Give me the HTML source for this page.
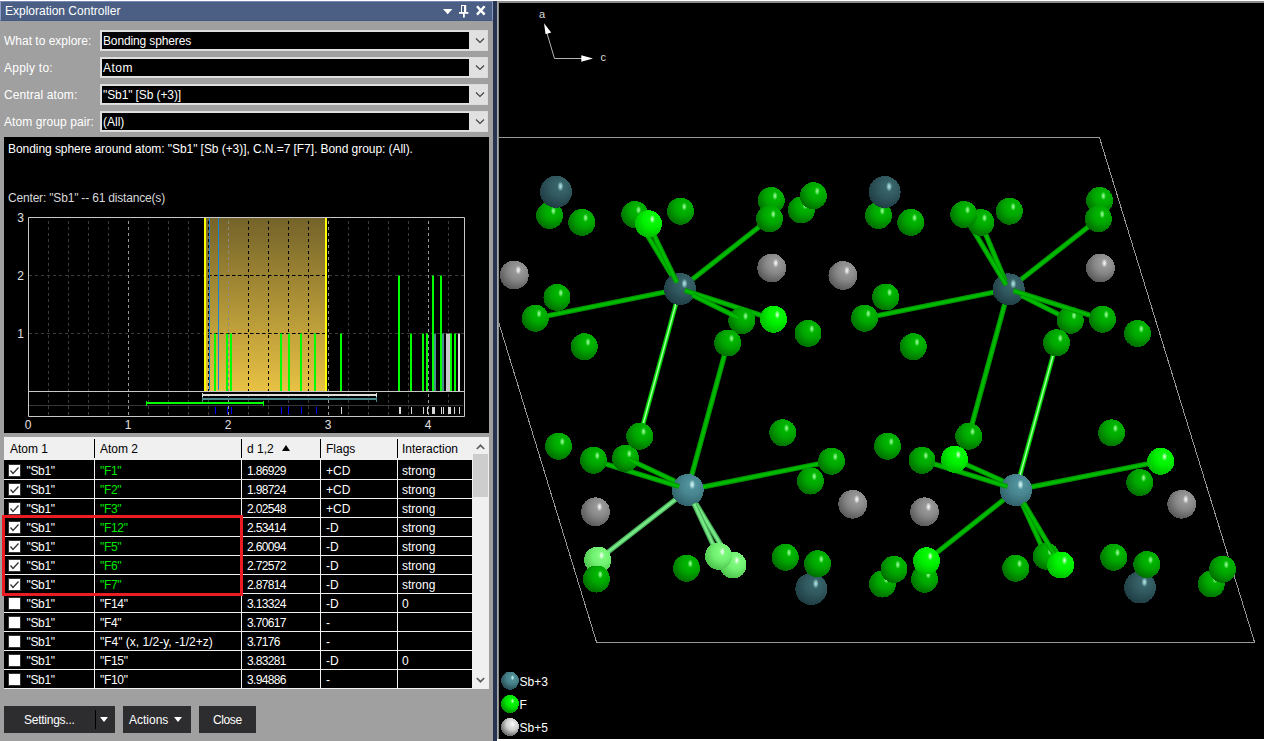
<!DOCTYPE html>
<html><head><meta charset="utf-8"><title>Exploration Controller</title><style>
*{margin:0;padding:0;box-sizing:border-box}
html,body{width:1264px;height:741px;overflow:hidden;background:#000}
body{position:relative;font-family:"Liberation Sans",sans-serif;font-size:12px;color:#fff}
#view{position:absolute;left:0;top:0;width:1264px;height:741px;background:#000}
#scene{position:absolute;left:0;top:0}
#topw{position:absolute;left:0;top:0;width:1264px;height:1px;background:#fff}
#vtop{position:absolute;left:497px;top:1px;width:767px;height:2px;background:#8c8c8c}
#vleft{position:absolute;left:497px;top:1px;width:2px;height:738px;background:linear-gradient(90deg,#a8a8a8 50%,#8a8a8a 50%)}
#vbot{position:absolute;left:497px;top:739px;width:767px;height:2px;background:#fff}
#split{position:absolute;left:493px;top:1px;width:4px;height:740px;background:#27344f}
#panel{position:absolute;left:0;top:1px;width:493px;height:740px;background:#a0a0a0}
#title{position:absolute;left:0;top:0;width:493px;height:20px;background:#4b5f85;border-top:1px solid #7486b2;border-right:1px solid #8799c6;border-left:1px solid #8c9dc6;border-bottom:1px solid #465a80}
#title span{position:absolute;left:4px;top:2px;font-size:12px;line-height:14px;color:#fff;white-space:nowrap}
.lbl{position:absolute;left:4px;font-size:12px;line-height:14px;color:#fff;white-space:nowrap}
.combo{position:absolute;left:100px;width:388px;height:21px;background:#e1e1e1;border:1px solid #dcdcdc}
.combo .in{position:absolute;left:1px;top:1px;width:367px;height:17px;background:#000;color:#fff;line-height:19px;padding-left:1px;white-space:nowrap}
.combo svg{position:absolute;left:374px;top:7px}
#info{position:absolute;left:4px;top:136px;width:485px;height:296px;background:#000}
#info p{position:absolute;left:4px;white-space:nowrap;line-height:14px}
#chart{position:absolute;left:0;top:-1px}
#tbl{position:absolute;left:4px;top:436px;width:468px;height:252px;background:#000;overflow:hidden}
.th{position:absolute;left:0;top:0;width:468px;height:23px;background:#f0f0f0;color:#000}
.th span{position:absolute;top:5px;line-height:14px;white-space:nowrap}
.th i{position:absolute;top:2px;width:1px;height:19px;background:#000}
.sort{position:absolute;left:278px;top:8px;width:0;height:0;border-left:4.5px solid transparent;border-right:4.5px solid transparent;border-bottom:6px solid #000}
.tr{position:absolute;left:0;width:468px;height:19px;border-bottom:1px solid #f0f0f0}
.tr span{position:absolute;top:3px;line-height:14px;white-space:nowrap;color:#fff}
.tr.on .a2{color:#00e800}
.num{letter-spacing:-0.65px}
.cb{position:absolute;left:4px;top:3px;width:13px;height:13px;background:#fff;border:1px solid #333}
.cb svg{position:absolute;left:-1px;top:-1px}
.vl{position:absolute;top:23px;width:1px;height:229px;background:#f0f0f0}
#sb{position:absolute;left:472px;top:436px;width:17px;height:252px;background:#f0f0f0}
#sb .thumb{position:absolute;left:1px;top:17px;width:15px;height:43px;background:#cdcdcd}
#sb svg{position:absolute;left:4px}
#red{position:absolute;left:2px;top:514px;width:241px;height:81px;border:3px solid #ec1c24}
.btn{position:absolute;top:705px;height:27px;background:#2d2d30;color:#fff;line-height:27px;white-space:nowrap}
.tri{position:absolute;width:0;height:0;border-left:4.5px solid transparent;border-right:4.5px solid transparent;border-top:5px solid #fff}
</style></head>
<body>
<div id="view"><svg id="scene" width="1264" height="741" viewBox="0 0 1264 741"><defs><radialGradient id="gG" cx="0.62" cy="0.36" r="0.80" fx="0.64" fy="0.32"><stop offset="0" stop-color="#00c000"/><stop offset="0.42" stop-color="#00a600"/><stop offset="0.8" stop-color="#007400"/><stop offset="1" stop-color="#005400"/></radialGradient><radialGradient id="hG"><stop offset="0" stop-color="#a8ffa8" stop-opacity="0.88"/><stop offset="0.35" stop-color="#a8ffa8" stop-opacity="0.7"/><stop offset="1" stop-color="#a8ffa8" stop-opacity="0"/></radialGradient><radialGradient id="gB" cx="0.62" cy="0.36" r="0.80" fx="0.64" fy="0.32"><stop offset="0" stop-color="#10ff10"/><stop offset="0.42" stop-color="#00f000"/><stop offset="0.8" stop-color="#00c000"/><stop offset="1" stop-color="#00a000"/></radialGradient><radialGradient id="hB"><stop offset="0" stop-color="#e0ffe0" stop-opacity="0.88"/><stop offset="0.35" stop-color="#e0ffe0" stop-opacity="0.7"/><stop offset="1" stop-color="#e0ffe0" stop-opacity="0"/></radialGradient><radialGradient id="gL" cx="0.62" cy="0.36" r="0.80" fx="0.64" fy="0.32"><stop offset="0" stop-color="#88ff88"/><stop offset="0.42" stop-color="#70f070"/><stop offset="0.8" stop-color="#50c850"/><stop offset="1" stop-color="#40a840"/></radialGradient><radialGradient id="hL"><stop offset="0" stop-color="#ffffff" stop-opacity="0.88"/><stop offset="0.35" stop-color="#ffffff" stop-opacity="0.7"/><stop offset="1" stop-color="#ffffff" stop-opacity="0"/></radialGradient><radialGradient id="gS" cx="0.62" cy="0.36" r="0.80" fx="0.64" fy="0.32"><stop offset="0" stop-color="#3b6a70"/><stop offset="0.42" stop-color="#30585e"/><stop offset="0.8" stop-color="#204046"/><stop offset="1" stop-color="#162e34"/></radialGradient><radialGradient id="hS"><stop offset="0" stop-color="#b8f0ec" stop-opacity="0.88"/><stop offset="0.35" stop-color="#b8f0ec" stop-opacity="0.7"/><stop offset="1" stop-color="#b8f0ec" stop-opacity="0"/></radialGradient><radialGradient id="gT" cx="0.62" cy="0.36" r="0.80" fx="0.64" fy="0.32"><stop offset="0" stop-color="#569aa4"/><stop offset="0.42" stop-color="#47848e"/><stop offset="0.8" stop-color="#33666e"/><stop offset="1" stop-color="#284e56"/></radialGradient><radialGradient id="hT"><stop offset="0" stop-color="#e0ffff" stop-opacity="0.88"/><stop offset="0.35" stop-color="#e0ffff" stop-opacity="0.7"/><stop offset="1" stop-color="#e0ffff" stop-opacity="0"/></radialGradient><radialGradient id="gY" cx="0.62" cy="0.36" r="0.80" fx="0.64" fy="0.32"><stop offset="0" stop-color="#a2a2a2"/><stop offset="0.42" stop-color="#888888"/><stop offset="0.8" stop-color="#5e5e5e"/><stop offset="1" stop-color="#444444"/></radialGradient><radialGradient id="hY"><stop offset="0" stop-color="#ffffff" stop-opacity="0.88"/><stop offset="0.35" stop-color="#ffffff" stop-opacity="0.7"/><stop offset="1" stop-color="#ffffff" stop-opacity="0"/></radialGradient><radialGradient id="gLS" cx="0.62" cy="0.36" r="0.80" fx="0.64" fy="0.32"><stop offset="0" stop-color="#5a9aa0"/><stop offset="0.42" stop-color="#468088"/><stop offset="0.8" stop-color="#2a5058"/><stop offset="1" stop-color="#2a5058"/></radialGradient><radialGradient id="hLS"><stop offset="0" stop-color="#d0ffff" stop-opacity="0.88"/><stop offset="0.35" stop-color="#d0ffff" stop-opacity="0.7"/><stop offset="1" stop-color="#d0ffff" stop-opacity="0"/></radialGradient><radialGradient id="gLF" cx="0.62" cy="0.36" r="0.80" fx="0.64" fy="0.32"><stop offset="0" stop-color="#10ff10"/><stop offset="0.42" stop-color="#00e800"/><stop offset="0.8" stop-color="#009800"/><stop offset="1" stop-color="#009800"/></radialGradient><radialGradient id="hLF"><stop offset="0" stop-color="#d0ffd0" stop-opacity="0.88"/><stop offset="0.35" stop-color="#d0ffd0" stop-opacity="0.7"/><stop offset="1" stop-color="#d0ffd0" stop-opacity="0"/></radialGradient><radialGradient id="gLY" cx="0.62" cy="0.36" r="0.80" fx="0.64" fy="0.32"><stop offset="0" stop-color="#f4f4f4"/><stop offset="0.42" stop-color="#d0d0d0"/><stop offset="0.8" stop-color="#707070"/><stop offset="1" stop-color="#707070"/></radialGradient><radialGradient id="hLY"><stop offset="0" stop-color="#ffffff" stop-opacity="0.88"/><stop offset="0.35" stop-color="#ffffff" stop-opacity="0.7"/><stop offset="1" stop-color="#ffffff" stop-opacity="0"/></radialGradient></defs><g stroke="#989898" stroke-width="1" fill="none" shape-rendering="crispEdges"><path d="M499 137.5H1099.5L1254.5 642H596.5L499 323.5"/></g><line x1="680" y1="289" x2="769.5" y2="218.75" stroke="#009a00" stroke-width="5.2"/><line x1="680" y1="289" x2="769.5" y2="218.75" stroke="#00bc00" stroke-width="2.60"/><line x1="680" y1="289" x2="535.25" y2="318.25" stroke="#009a00" stroke-width="5.2"/><line x1="680" y1="289" x2="535.25" y2="318.25" stroke="#00bc00" stroke-width="2.60"/><line x1="680" y1="289" x2="634.75" y2="214.5" stroke="#009a00" stroke-width="5.2"/><line x1="680" y1="289" x2="634.75" y2="214.5" stroke="#00bc00" stroke-width="2.60"/><line x1="680" y1="289" x2="639.75" y2="436.25" stroke="#00c800" stroke-width="4.6"/><line x1="680" y1="289" x2="639.75" y2="436.25" stroke="#28f028" stroke-width="2.30"/><line x1="680" y1="289" x2="639.75" y2="436.25" stroke="#b0ffb0" stroke-width="1.1"/><line x1="1008.75" y1="289.25" x2="1098.5" y2="218.75" stroke="#009a00" stroke-width="5.2"/><line x1="1008.75" y1="289.25" x2="1098.5" y2="218.75" stroke="#00bc00" stroke-width="2.60"/><line x1="1008.75" y1="289.25" x2="864.5" y2="318.25" stroke="#009a00" stroke-width="5.2"/><line x1="1008.75" y1="289.25" x2="864.5" y2="318.25" stroke="#00bc00" stroke-width="2.60"/><line x1="1008.75" y1="289.25" x2="968.75" y2="436.25" stroke="#009a00" stroke-width="5.2"/><line x1="1008.75" y1="289.25" x2="968.75" y2="436.25" stroke="#00bc00" stroke-width="2.60"/><line x1="687.7" y1="490" x2="727.75" y2="343" stroke="#009a00" stroke-width="5.2"/><line x1="687.7" y1="490" x2="727.75" y2="343" stroke="#00bc00" stroke-width="2.60"/><line x1="687.7" y1="490" x2="831.5" y2="461.25" stroke="#009a00" stroke-width="5.2"/><line x1="687.7" y1="490" x2="831.5" y2="461.25" stroke="#00bc00" stroke-width="2.60"/><line x1="687.7" y1="490" x2="597.75" y2="560" stroke="#48b458" stroke-width="5.2"/><line x1="687.7" y1="490" x2="597.75" y2="560" stroke="#78e888" stroke-width="2.60"/><line x1="687.7" y1="490" x2="733" y2="565" stroke="#48b458" stroke-width="5.2"/><line x1="687.7" y1="490" x2="733" y2="565" stroke="#78e888" stroke-width="2.60"/><line x1="1016" y1="490" x2="1056.5" y2="342.75" stroke="#00c800" stroke-width="4.6"/><line x1="1016" y1="490" x2="1056.5" y2="342.75" stroke="#28f028" stroke-width="2.30"/><line x1="1016" y1="490" x2="1056.5" y2="342.75" stroke="#b0ffb0" stroke-width="1.1"/><line x1="1016" y1="490" x2="1160.75" y2="461.25" stroke="#009a00" stroke-width="5.2"/><line x1="1016" y1="490" x2="1160.75" y2="461.25" stroke="#00bc00" stroke-width="2.60"/><line x1="1016" y1="490" x2="926.5" y2="560.75" stroke="#009a00" stroke-width="5.2"/><line x1="1016" y1="490" x2="926.5" y2="560.75" stroke="#00bc00" stroke-width="2.60"/><line x1="1016" y1="490" x2="1046.25" y2="556.25" stroke="#009a00" stroke-width="5.2"/><line x1="1016" y1="490" x2="1046.25" y2="556.25" stroke="#00bc00" stroke-width="2.60"/><circle cx="680" cy="289" r="16.0" fill="url(#gS)" shape-rendering="crispEdges"/><ellipse cx="684.48" cy="283.56" rx="3.04" ry="4.96" fill="url(#hS)"/><circle cx="1008.75" cy="289.25" r="16.0" fill="url(#gS)" shape-rendering="crispEdges"/><ellipse cx="1013.23" cy="283.81" rx="3.04" ry="4.96" fill="url(#hS)"/><circle cx="687.7" cy="490" r="16.0" fill="url(#gT)" shape-rendering="crispEdges"/><ellipse cx="692.18" cy="484.56" rx="3.04" ry="4.96" fill="url(#hT)"/><circle cx="1016" cy="490" r="16.0" fill="url(#gT)" shape-rendering="crispEdges"/><ellipse cx="1020.48" cy="484.56" rx="3.04" ry="4.96" fill="url(#hT)"/><line x1="676.96" y1="282.7" x2="648.5" y2="223.75" stroke="#009a00" stroke-width="5.2"/><line x1="676.96" y1="282.7" x2="648.5" y2="223.75" stroke="#00bc00" stroke-width="2.60"/><line x1="684.76" y1="290.54" x2="773.5" y2="319.25" stroke="#009a00" stroke-width="5.2"/><line x1="684.76" y1="290.54" x2="773.5" y2="319.25" stroke="#00bc00" stroke-width="2.60"/><line x1="1005.27" y1="280.95" x2="980.75" y2="222.5" stroke="#009a00" stroke-width="5.2"/><line x1="1005.27" y1="280.95" x2="980.75" y2="222.5" stroke="#00bc00" stroke-width="2.60"/><line x1="1006.17" y1="284.97" x2="963.75" y2="214.5" stroke="#009a00" stroke-width="5.2"/><line x1="1006.17" y1="284.97" x2="963.75" y2="214.5" stroke="#00bc00" stroke-width="2.60"/><line x1="1021.25" y1="295.55" x2="1070.25" y2="320.25" stroke="#009a00" stroke-width="5.2"/><line x1="1021.25" y1="295.55" x2="1070.25" y2="320.25" stroke="#00bc00" stroke-width="2.60"/><line x1="679.1" y1="486.4" x2="593.5" y2="460.25" stroke="#009a00" stroke-width="5.2"/><line x1="679.1" y1="486.4" x2="593.5" y2="460.25" stroke="#00bc00" stroke-width="2.60"/><line x1="1007.4" y1="486.4" x2="922" y2="460.25" stroke="#009a00" stroke-width="5.2"/><line x1="1007.4" y1="486.4" x2="922" y2="460.25" stroke="#00bc00" stroke-width="2.60"/><circle cx="549.6" cy="215.5" r="13.5" fill="url(#gG)" shape-rendering="crispEdges"/><ellipse cx="553.38" cy="210.91" rx="2.56" ry="4.18" fill="url(#hG)"/><circle cx="634.75" cy="214.5" r="13.5" fill="url(#gG)" shape-rendering="crispEdges"/><ellipse cx="638.53" cy="209.91" rx="2.56" ry="4.18" fill="url(#hG)"/><circle cx="771.2" cy="200.5" r="13.5" fill="url(#gG)" shape-rendering="crispEdges"/><ellipse cx="774.98" cy="195.91" rx="2.56" ry="4.18" fill="url(#hG)"/><circle cx="801.3" cy="210" r="13.5" fill="url(#gG)" shape-rendering="crispEdges"/><ellipse cx="805.08" cy="205.41" rx="2.56" ry="4.18" fill="url(#hG)"/><circle cx="878.5" cy="215.5" r="13.5" fill="url(#gG)" shape-rendering="crispEdges"/><ellipse cx="882.28" cy="210.91" rx="2.56" ry="4.18" fill="url(#hG)"/><circle cx="980.75" cy="222.5" r="13.5" fill="url(#gG)" shape-rendering="crispEdges"/><ellipse cx="984.53" cy="217.91" rx="2.56" ry="4.18" fill="url(#hG)"/><circle cx="1099.6" cy="200.5" r="13.5" fill="url(#gG)" shape-rendering="crispEdges"/><ellipse cx="1103.38" cy="195.91" rx="2.56" ry="4.18" fill="url(#hG)"/><circle cx="741.75" cy="320.75" r="13.5" fill="url(#gG)" shape-rendering="crispEdges"/><ellipse cx="745.53" cy="316.16" rx="2.56" ry="4.18" fill="url(#hG)"/><circle cx="1070.25" cy="320.25" r="13.5" fill="url(#gG)" shape-rendering="crispEdges"/><ellipse cx="1074.03" cy="315.66" rx="2.56" ry="4.18" fill="url(#hG)"/><circle cx="625.5" cy="458.25" r="13.5" fill="url(#gG)" shape-rendering="crispEdges"/><ellipse cx="629.28" cy="453.66" rx="2.56" ry="4.18" fill="url(#hG)"/><circle cx="733" cy="565" r="13.5" fill="url(#gL)" shape-rendering="crispEdges"/><ellipse cx="736.78" cy="560.41" rx="2.56" ry="4.18" fill="url(#hL)"/><circle cx="597.75" cy="560" r="13.5" fill="url(#gL)" shape-rendering="crispEdges"/><ellipse cx="601.53" cy="555.41" rx="2.56" ry="4.18" fill="url(#hL)"/><circle cx="924.5" cy="579.25" r="13.5" fill="url(#gG)" shape-rendering="crispEdges"/><ellipse cx="928.28" cy="574.66" rx="2.56" ry="4.18" fill="url(#hG)"/><circle cx="882.5" cy="584" r="13.5" fill="url(#gG)" shape-rendering="crispEdges"/><ellipse cx="886.28" cy="579.41" rx="2.56" ry="4.18" fill="url(#hG)"/><circle cx="1046.25" cy="556.25" r="13.5" fill="url(#gG)" shape-rendering="crispEdges"/><ellipse cx="1050.03" cy="551.66" rx="2.56" ry="4.18" fill="url(#hG)"/><circle cx="1211.25" cy="584" r="13.5" fill="url(#gG)" shape-rendering="crispEdges"/><ellipse cx="1215.03" cy="579.41" rx="2.56" ry="4.18" fill="url(#hG)"/><circle cx="811.3" cy="589" r="16.0" fill="url(#gS)" shape-rendering="crispEdges"/><ellipse cx="815.78" cy="583.56" rx="3.04" ry="4.96" fill="url(#hS)"/><circle cx="1140" cy="587.5" r="16.0" fill="url(#gS)" shape-rendering="crispEdges"/><ellipse cx="1144.48" cy="582.06" rx="3.04" ry="4.96" fill="url(#hS)"/><line x1="692.55" y1="295.2" x2="738.7" y2="318" stroke="#009a00" stroke-width="5.2"/><line x1="692.55" y1="295.2" x2="738.7" y2="318" stroke="#00bc00" stroke-width="2.60"/><line x1="1013.51" y1="290.77" x2="1102.5" y2="319.25" stroke="#009a00" stroke-width="5.2"/><line x1="1013.51" y1="290.77" x2="1102.5" y2="319.25" stroke="#00bc00" stroke-width="2.60"/><line x1="674.8" y1="481" x2="629" y2="459.5" stroke="#009a00" stroke-width="5.2"/><line x1="674.8" y1="481" x2="629" y2="459.5" stroke="#00bc00" stroke-width="2.60"/><line x1="1003.1" y1="481" x2="954.5" y2="459.25" stroke="#009a00" stroke-width="5.2"/><line x1="1003.1" y1="481" x2="954.5" y2="459.25" stroke="#00bc00" stroke-width="2.60"/><line x1="1023.69" y1="502.88" x2="1060.75" y2="565" stroke="#009a00" stroke-width="5.2"/><line x1="1023.69" y1="502.88" x2="1060.75" y2="565" stroke="#00bc00" stroke-width="2.60"/><line x1="694.02" y1="503.6" x2="718.5" y2="556.25" stroke="#48b458" stroke-width="5.2"/><line x1="694.02" y1="503.6" x2="718.5" y2="556.25" stroke="#78e888" stroke-width="2.60"/><circle cx="556" cy="191.75" r="16.0" fill="url(#gS)" shape-rendering="crispEdges"/><ellipse cx="560.48" cy="186.31" rx="3.04" ry="4.96" fill="url(#hS)"/><circle cx="884.6" cy="192" r="16.0" fill="url(#gS)" shape-rendering="crispEdges"/><ellipse cx="889.08" cy="186.56" rx="3.04" ry="4.96" fill="url(#hS)"/><circle cx="581.8" cy="222.4" r="13.5" fill="url(#gG)" shape-rendering="crispEdges"/><ellipse cx="585.58" cy="217.81" rx="2.56" ry="4.18" fill="url(#hG)"/><circle cx="648.5" cy="223.75" r="13.5" fill="url(#gB)" shape-rendering="crispEdges"/><ellipse cx="652.28" cy="219.16" rx="2.56" ry="4.18" fill="url(#hB)"/><circle cx="680.5" cy="211.25" r="13.5" fill="url(#gG)" shape-rendering="crispEdges"/><ellipse cx="684.28" cy="206.66" rx="2.56" ry="4.18" fill="url(#hG)"/><circle cx="769.5" cy="218.75" r="13.5" fill="url(#gG)" shape-rendering="crispEdges"/><ellipse cx="773.28" cy="214.16" rx="2.56" ry="4.18" fill="url(#hG)"/><circle cx="813.4" cy="195.7" r="13.5" fill="url(#gG)" shape-rendering="crispEdges"/><ellipse cx="817.18" cy="191.11" rx="2.56" ry="4.18" fill="url(#hG)"/><circle cx="910.75" cy="222.4" r="13.5" fill="url(#gG)" shape-rendering="crispEdges"/><ellipse cx="914.53" cy="217.81" rx="2.56" ry="4.18" fill="url(#hG)"/><circle cx="963.75" cy="214.5" r="13.5" fill="url(#gG)" shape-rendering="crispEdges"/><ellipse cx="967.53" cy="209.91" rx="2.56" ry="4.18" fill="url(#hG)"/><circle cx="1009.4" cy="211.25" r="13.5" fill="url(#gG)" shape-rendering="crispEdges"/><ellipse cx="1013.18" cy="206.66" rx="2.56" ry="4.18" fill="url(#hG)"/><circle cx="1098.4" cy="218.75" r="13.5" fill="url(#gG)" shape-rendering="crispEdges"/><ellipse cx="1102.18" cy="214.16" rx="2.56" ry="4.18" fill="url(#hG)"/><circle cx="514.25" cy="275" r="14.4" fill="url(#gY)" shape-rendering="crispEdges"/><ellipse cx="518.28" cy="270.10" rx="2.74" ry="4.46" fill="url(#hY)"/><circle cx="771.7" cy="268" r="14.4" fill="url(#gY)" shape-rendering="crispEdges"/><ellipse cx="775.73" cy="263.10" rx="2.74" ry="4.46" fill="url(#hY)"/><circle cx="842.9" cy="275.5" r="14.4" fill="url(#gY)" shape-rendering="crispEdges"/><ellipse cx="846.93" cy="270.60" rx="2.74" ry="4.46" fill="url(#hY)"/><circle cx="1100.4" cy="268" r="14.4" fill="url(#gY)" shape-rendering="crispEdges"/><ellipse cx="1104.43" cy="263.10" rx="2.74" ry="4.46" fill="url(#hY)"/><circle cx="557" cy="297.5" r="13.5" fill="url(#gG)" shape-rendering="crispEdges"/><ellipse cx="560.78" cy="292.91" rx="2.56" ry="4.18" fill="url(#hG)"/><circle cx="535.25" cy="318.25" r="13.5" fill="url(#gG)" shape-rendering="crispEdges"/><ellipse cx="539.03" cy="313.66" rx="2.56" ry="4.18" fill="url(#hG)"/><circle cx="584.25" cy="346.75" r="13.5" fill="url(#gG)" shape-rendering="crispEdges"/><ellipse cx="588.03" cy="342.16" rx="2.56" ry="4.18" fill="url(#hG)"/><circle cx="773.5" cy="319.25" r="13.5" fill="url(#gB)" shape-rendering="crispEdges"/><ellipse cx="777.28" cy="314.66" rx="2.56" ry="4.18" fill="url(#hB)"/><circle cx="727.75" cy="343" r="13.5" fill="url(#gG)" shape-rendering="crispEdges"/><ellipse cx="731.53" cy="338.41" rx="2.56" ry="4.18" fill="url(#hG)"/><circle cx="808" cy="333.4" r="13.5" fill="url(#gG)" shape-rendering="crispEdges"/><ellipse cx="811.78" cy="328.81" rx="2.56" ry="4.18" fill="url(#hG)"/><circle cx="885.75" cy="297" r="13.5" fill="url(#gG)" shape-rendering="crispEdges"/><ellipse cx="889.53" cy="292.41" rx="2.56" ry="4.18" fill="url(#hG)"/><circle cx="864.5" cy="318.25" r="13.5" fill="url(#gG)" shape-rendering="crispEdges"/><ellipse cx="868.28" cy="313.66" rx="2.56" ry="4.18" fill="url(#hG)"/><circle cx="913.25" cy="346.75" r="13.5" fill="url(#gG)" shape-rendering="crispEdges"/><ellipse cx="917.03" cy="342.16" rx="2.56" ry="4.18" fill="url(#hG)"/><circle cx="1102.5" cy="319.25" r="13.5" fill="url(#gG)" shape-rendering="crispEdges"/><ellipse cx="1106.28" cy="314.66" rx="2.56" ry="4.18" fill="url(#hG)"/><circle cx="1056.5" cy="342.75" r="13.5" fill="url(#gG)" shape-rendering="crispEdges"/><ellipse cx="1060.28" cy="338.16" rx="2.56" ry="4.18" fill="url(#hG)"/><circle cx="1137.5" cy="333.5" r="13.5" fill="url(#gG)" shape-rendering="crispEdges"/><ellipse cx="1141.28" cy="328.91" rx="2.56" ry="4.18" fill="url(#hG)"/><circle cx="639.75" cy="436.25" r="13.5" fill="url(#gG)" shape-rendering="crispEdges"/><ellipse cx="643.53" cy="431.66" rx="2.56" ry="4.18" fill="url(#hG)"/><circle cx="558.5" cy="446.25" r="13.5" fill="url(#gG)" shape-rendering="crispEdges"/><ellipse cx="562.28" cy="441.66" rx="2.56" ry="4.18" fill="url(#hG)"/><circle cx="593.5" cy="460.25" r="13.5" fill="url(#gG)" shape-rendering="crispEdges"/><ellipse cx="597.28" cy="455.66" rx="2.56" ry="4.18" fill="url(#hG)"/><circle cx="782.75" cy="432.75" r="13.5" fill="url(#gG)" shape-rendering="crispEdges"/><ellipse cx="786.53" cy="428.16" rx="2.56" ry="4.18" fill="url(#hG)"/><circle cx="810.5" cy="481" r="13.5" fill="url(#gG)" shape-rendering="crispEdges"/><ellipse cx="814.28" cy="476.41" rx="2.56" ry="4.18" fill="url(#hG)"/><circle cx="968.75" cy="436.25" r="13.5" fill="url(#gG)" shape-rendering="crispEdges"/><ellipse cx="972.53" cy="431.66" rx="2.56" ry="4.18" fill="url(#hG)"/><circle cx="887.5" cy="446.25" r="13.5" fill="url(#gG)" shape-rendering="crispEdges"/><ellipse cx="891.28" cy="441.66" rx="2.56" ry="4.18" fill="url(#hG)"/><circle cx="922" cy="460.25" r="13.5" fill="url(#gG)" shape-rendering="crispEdges"/><ellipse cx="925.78" cy="455.66" rx="2.56" ry="4.18" fill="url(#hG)"/><circle cx="954.5" cy="459.25" r="13.5" fill="url(#gB)" shape-rendering="crispEdges"/><ellipse cx="958.28" cy="454.66" rx="2.56" ry="4.18" fill="url(#hB)"/><circle cx="1111.6" cy="432.9" r="13.5" fill="url(#gG)" shape-rendering="crispEdges"/><ellipse cx="1115.38" cy="428.31" rx="2.56" ry="4.18" fill="url(#hG)"/><circle cx="1139.8" cy="482.5" r="13.5" fill="url(#gG)" shape-rendering="crispEdges"/><ellipse cx="1143.58" cy="477.91" rx="2.56" ry="4.18" fill="url(#hG)"/><circle cx="831.5" cy="461.25" r="13.5" fill="url(#gG)" shape-rendering="crispEdges"/><ellipse cx="835.28" cy="456.66" rx="2.56" ry="4.18" fill="url(#hG)"/><circle cx="1160.75" cy="461.25" r="13.5" fill="url(#gB)" shape-rendering="crispEdges"/><ellipse cx="1164.53" cy="456.66" rx="2.56" ry="4.18" fill="url(#hB)"/><circle cx="595.5" cy="511.75" r="14.4" fill="url(#gY)" shape-rendering="crispEdges"/><ellipse cx="599.53" cy="506.85" rx="2.74" ry="4.46" fill="url(#hY)"/><circle cx="852.75" cy="504.25" r="14.4" fill="url(#gY)" shape-rendering="crispEdges"/><ellipse cx="856.78" cy="499.35" rx="2.74" ry="4.46" fill="url(#hY)"/><circle cx="924.5" cy="511.75" r="14.4" fill="url(#gY)" shape-rendering="crispEdges"/><ellipse cx="928.53" cy="506.85" rx="2.74" ry="4.46" fill="url(#hY)"/><circle cx="1181.75" cy="504.25" r="14.4" fill="url(#gY)" shape-rendering="crispEdges"/><ellipse cx="1185.78" cy="499.35" rx="2.74" ry="4.46" fill="url(#hY)"/><circle cx="596.5" cy="579" r="13.5" fill="url(#gG)" shape-rendering="crispEdges"/><ellipse cx="600.28" cy="574.41" rx="2.56" ry="4.18" fill="url(#hG)"/><circle cx="686.5" cy="568.25" r="13.5" fill="url(#gG)" shape-rendering="crispEdges"/><ellipse cx="690.28" cy="563.66" rx="2.56" ry="4.18" fill="url(#hG)"/><circle cx="718.5" cy="556.25" r="13.5" fill="url(#gL)" shape-rendering="crispEdges"/><ellipse cx="722.28" cy="551.66" rx="2.56" ry="4.18" fill="url(#hL)"/><circle cx="785.25" cy="557.25" r="13.5" fill="url(#gG)" shape-rendering="crispEdges"/><ellipse cx="789.03" cy="552.66" rx="2.56" ry="4.18" fill="url(#hG)"/><circle cx="817.5" cy="563.75" r="13.5" fill="url(#gG)" shape-rendering="crispEdges"/><ellipse cx="821.28" cy="559.16" rx="2.56" ry="4.18" fill="url(#hG)"/><circle cx="926.5" cy="560.75" r="13.5" fill="url(#gB)" shape-rendering="crispEdges"/><ellipse cx="930.28" cy="556.16" rx="2.56" ry="4.18" fill="url(#hB)"/><circle cx="894" cy="569.25" r="13.5" fill="url(#gG)" shape-rendering="crispEdges"/><ellipse cx="897.78" cy="564.66" rx="2.56" ry="4.18" fill="url(#hG)"/><circle cx="1015.75" cy="568.25" r="13.5" fill="url(#gG)" shape-rendering="crispEdges"/><ellipse cx="1019.53" cy="563.66" rx="2.56" ry="4.18" fill="url(#hG)"/><circle cx="1060.75" cy="565" r="13.5" fill="url(#gB)" shape-rendering="crispEdges"/><ellipse cx="1064.53" cy="560.41" rx="2.56" ry="4.18" fill="url(#hB)"/><circle cx="1113.75" cy="557.25" r="13.5" fill="url(#gG)" shape-rendering="crispEdges"/><ellipse cx="1117.53" cy="552.66" rx="2.56" ry="4.18" fill="url(#hG)"/><circle cx="1146.75" cy="564.5" r="13.5" fill="url(#gG)" shape-rendering="crispEdges"/><ellipse cx="1150.53" cy="559.91" rx="2.56" ry="4.18" fill="url(#hG)"/><circle cx="1222.5" cy="569.25" r="13.5" fill="url(#gG)" shape-rendering="crispEdges"/><ellipse cx="1226.28" cy="564.66" rx="2.56" ry="4.18" fill="url(#hG)"/><g stroke="#b4b4b4" stroke-width="1" fill="none"><path d="M546 30L554.5 58.5H584"/></g><path d="M544 23.2L551.2 32.4L545.6 34.2Z" fill="#fff"/><path d="M593 58.5L581.3 55.2V61.8Z" fill="#fff"/><text x="539" y="18" font-family="Liberation Sans,sans-serif" font-size="11" fill="#dcdcdc">a</text><text x="600.5" y="61" font-family="Liberation Sans,sans-serif" font-size="11" fill="#dcdcdc">c</text><circle cx="510" cy="680.8" r="9" fill="url(#gLS)" shape-rendering="crispEdges"/><ellipse cx="512.52" cy="677.74" rx="1.71" ry="2.79" fill="url(#hLS)"/><circle cx="510" cy="704" r="9" fill="url(#gLF)" shape-rendering="crispEdges"/><ellipse cx="512.52" cy="700.94" rx="1.71" ry="2.79" fill="url(#hLF)"/><circle cx="510" cy="727" r="9" fill="url(#gLY)" shape-rendering="crispEdges"/><ellipse cx="512.52" cy="723.94" rx="1.71" ry="2.79" fill="url(#hLY)"/><g font-family="Liberation Sans,sans-serif" font-size="12" fill="#fff"><text x="519.5" y="686">Sb+3</text><text x="519.5" y="709">F</text><text x="519.5" y="732">Sb+5</text></g></svg></div>
<div id="vtop"></div><div id="vleft"></div><div id="vbot"></div>
<div id="split"></div>

<div id="panel">
<div id="title"><span>Exploration Controller</span>
<svg width="50" height="20" viewBox="0 0 50 20" style="position:absolute;left:438px;top:-1px">
<path d="M4 8H13.4L8.7 13.2Z" fill="#fff"/>
<path d="M22.5 4.5H26V11" fill="none" stroke="#fff" stroke-width="1"/><rect x="25" y="4" width="2.2" height="8" fill="#fff"/><rect x="22" y="4" width="1" height="8" fill="#fff"/>
<rect x="20" y="11" width="9.4" height="1.8" fill="#fff"/><rect x="24" y="12" width="1.8" height="4.6" fill="#fff"/>
<path d="M38 5.2L45.6 13.6M45.6 5.2L38 13.6" stroke="#fff" stroke-width="2.4" fill="none"/>
</svg></div>
<div class="lbl" style="top:33px">What to explore:</div><div class="combo" style="top:29px"><div class="in" style="letter-spacing:-0.13px">Bonding spheres</div><svg width="10" height="6" viewBox="0 0 10 6"><path d="M1 0.5L5 4.5L9 0.5" fill="none" stroke="#404040" stroke-width="1.1"/></svg></div>
<div class="lbl" style="top:60px;letter-spacing:0.25px">Apply to:</div><div class="combo" style="top:56px"><div class="in" style="letter-spacing:0.5px">Atom</div><svg width="10" height="6" viewBox="0 0 10 6"><path d="M1 0.5L5 4.5L9 0.5" fill="none" stroke="#404040" stroke-width="1.1"/></svg></div>
<div class="lbl" style="top:87px;letter-spacing:0.1px">Central atom:</div><div class="combo" style="top:83px"><div class="in" style="letter-spacing:-0.1px">"Sb1" [Sb (+3)]</div><svg width="10" height="6" viewBox="0 0 10 6"><path d="M1 0.5L5 4.5L9 0.5" fill="none" stroke="#404040" stroke-width="1.1"/></svg></div>
<div class="lbl" style="top:114px;letter-spacing:0.08px">Atom group pair:</div><div class="combo" style="top:110px"><div class="in" style="letter-spacing:0px">(All)</div><svg width="10" height="6" viewBox="0 0 10 6"><path d="M1 0.5L5 4.5L9 0.5" fill="none" stroke="#404040" stroke-width="1.1"/></svg></div>
<div id="info"><p style="top:5px;letter-spacing:-0.06px">Bonding sphere around atom: "Sb1" [Sb (+3)], C.N.=7 [F7]. Bond group: (All).</p>
<p style="top:54px;color:#d8d8d8;letter-spacing:-0.18px">Center: "Sb1" -- 61 distance(s)</p></div>
<svg id="chart" width="493" height="741" viewBox="0 0 493 741"><defs><linearGradient id="band" x1="0" y1="0" x2="0" y2="1"><stop offset="0" stop-color="#74632a"/><stop offset="1" stop-color="#e8c244"/></linearGradient></defs><rect x="206" y="218" width="119" height="173" fill="url(#band)"/><line x1="48.5" y1="221" x2="48.5" y2="391" stroke="#3c3c3c" stroke-width="1" stroke-dasharray="3 3"/><line x1="48.5" y1="394" x2="48.5" y2="416" stroke="#3c3c3c" stroke-width="1" stroke-dasharray="3 3"/><line x1="68.5" y1="221" x2="68.5" y2="391" stroke="#3c3c3c" stroke-width="1" stroke-dasharray="3 3"/><line x1="68.5" y1="394" x2="68.5" y2="416" stroke="#3c3c3c" stroke-width="1" stroke-dasharray="3 3"/><line x1="88.5" y1="221" x2="88.5" y2="391" stroke="#3c3c3c" stroke-width="1" stroke-dasharray="3 3"/><line x1="88.5" y1="394" x2="88.5" y2="416" stroke="#3c3c3c" stroke-width="1" stroke-dasharray="3 3"/><line x1="108.5" y1="221" x2="108.5" y2="391" stroke="#3c3c3c" stroke-width="1" stroke-dasharray="3 3"/><line x1="108.5" y1="394" x2="108.5" y2="416" stroke="#3c3c3c" stroke-width="1" stroke-dasharray="3 3"/><line x1="128.5" y1="221" x2="128.5" y2="391" stroke="#9a9a9a" stroke-width="1" stroke-dasharray="3 3"/><line x1="128.5" y1="394" x2="128.5" y2="416" stroke="#9a9a9a" stroke-width="1" stroke-dasharray="3 3"/><line x1="148.5" y1="221" x2="148.5" y2="391" stroke="#3c3c3c" stroke-width="1" stroke-dasharray="3 3"/><line x1="148.5" y1="394" x2="148.5" y2="416" stroke="#3c3c3c" stroke-width="1" stroke-dasharray="3 3"/><line x1="168.5" y1="221" x2="168.5" y2="391" stroke="#3c3c3c" stroke-width="1" stroke-dasharray="3 3"/><line x1="168.5" y1="394" x2="168.5" y2="416" stroke="#3c3c3c" stroke-width="1" stroke-dasharray="3 3"/><line x1="188.5" y1="221" x2="188.5" y2="391" stroke="#3c3c3c" stroke-width="1" stroke-dasharray="3 3"/><line x1="188.5" y1="394" x2="188.5" y2="416" stroke="#3c3c3c" stroke-width="1" stroke-dasharray="3 3"/><line x1="208.5" y1="221" x2="208.5" y2="391" stroke="#000" stroke-width="1" stroke-dasharray="3 3"/><line x1="208.5" y1="394" x2="208.5" y2="416" stroke="#3c3c3c" stroke-width="1" stroke-dasharray="3 3"/><line x1="228.5" y1="221" x2="228.5" y2="391" stroke="#8a8a8a" stroke-width="1" stroke-dasharray="3 3"/><line x1="228.5" y1="394" x2="228.5" y2="416" stroke="#9a9a9a" stroke-width="1" stroke-dasharray="3 3"/><line x1="248.5" y1="221" x2="248.5" y2="391" stroke="#000" stroke-width="1" stroke-dasharray="3 3"/><line x1="248.5" y1="394" x2="248.5" y2="416" stroke="#3c3c3c" stroke-width="1" stroke-dasharray="3 3"/><line x1="268.5" y1="221" x2="268.5" y2="391" stroke="#000" stroke-width="1" stroke-dasharray="3 3"/><line x1="268.5" y1="394" x2="268.5" y2="416" stroke="#3c3c3c" stroke-width="1" stroke-dasharray="3 3"/><line x1="288.5" y1="221" x2="288.5" y2="391" stroke="#000" stroke-width="1" stroke-dasharray="3 3"/><line x1="288.5" y1="394" x2="288.5" y2="416" stroke="#3c3c3c" stroke-width="1" stroke-dasharray="3 3"/><line x1="308.5" y1="221" x2="308.5" y2="391" stroke="#000" stroke-width="1" stroke-dasharray="3 3"/><line x1="308.5" y1="394" x2="308.5" y2="416" stroke="#3c3c3c" stroke-width="1" stroke-dasharray="3 3"/><line x1="328.5" y1="221" x2="328.5" y2="391" stroke="#9a9a9a" stroke-width="1" stroke-dasharray="3 3"/><line x1="328.5" y1="394" x2="328.5" y2="416" stroke="#9a9a9a" stroke-width="1" stroke-dasharray="3 3"/><line x1="348.5" y1="221" x2="348.5" y2="391" stroke="#3c3c3c" stroke-width="1" stroke-dasharray="3 3"/><line x1="348.5" y1="394" x2="348.5" y2="416" stroke="#3c3c3c" stroke-width="1" stroke-dasharray="3 3"/><line x1="368.5" y1="221" x2="368.5" y2="391" stroke="#3c3c3c" stroke-width="1" stroke-dasharray="3 3"/><line x1="368.5" y1="394" x2="368.5" y2="416" stroke="#3c3c3c" stroke-width="1" stroke-dasharray="3 3"/><line x1="388.5" y1="221" x2="388.5" y2="391" stroke="#3c3c3c" stroke-width="1" stroke-dasharray="3 3"/><line x1="388.5" y1="394" x2="388.5" y2="416" stroke="#3c3c3c" stroke-width="1" stroke-dasharray="3 3"/><line x1="408.5" y1="221" x2="408.5" y2="391" stroke="#3c3c3c" stroke-width="1" stroke-dasharray="3 3"/><line x1="408.5" y1="394" x2="408.5" y2="416" stroke="#3c3c3c" stroke-width="1" stroke-dasharray="3 3"/><line x1="428.5" y1="221" x2="428.5" y2="391" stroke="#9a9a9a" stroke-width="1" stroke-dasharray="3 3"/><line x1="428.5" y1="394" x2="428.5" y2="416" stroke="#9a9a9a" stroke-width="1" stroke-dasharray="3 3"/><line x1="448.5" y1="221" x2="448.5" y2="391" stroke="#3c3c3c" stroke-width="1" stroke-dasharray="3 3"/><line x1="448.5" y1="394" x2="448.5" y2="416" stroke="#3c3c3c" stroke-width="1" stroke-dasharray="3 3"/><line x1="29" y1="275.5" x2="464" y2="275.5" stroke="#3c3c3c" stroke-width="1" stroke-dasharray="3 3"/><line x1="208" y1="275.5" x2="325" y2="275.5" stroke="#000" stroke-width="1" stroke-dasharray="3 3"/><line x1="29" y1="333.5" x2="464" y2="333.5" stroke="#3c3c3c" stroke-width="1" stroke-dasharray="3 3"/><line x1="208" y1="333.5" x2="325" y2="333.5" stroke="#000" stroke-width="1" stroke-dasharray="3 3"/><rect x="204" y="218" width="2" height="173" fill="#ffff00"/><rect x="325" y="218" width="2" height="173" fill="#ffff00"/><rect x="209" y="218" width="1" height="172" fill="#1c82d4"/><rect x="218" y="218" width="1" height="172" fill="#1c82d4"/><rect x="214" y="333.5" width="2" height="57.5" fill="#00ff00"/><rect x="226" y="333.5" width="2" height="57.5" fill="#00ff00"/><rect x="230" y="333.5" width="2" height="57.5" fill="#00ff00"/><rect x="280" y="333.5" width="2" height="57.5" fill="#00ff00"/><rect x="288" y="333.5" width="2" height="57.5" fill="#00ff00"/><rect x="300" y="333.5" width="2" height="57.5" fill="#00ff00"/><rect x="314" y="333.5" width="2" height="57.5" fill="#00ff00"/><rect x="340" y="333.5" width="2" height="57.5" fill="#00ff00"/><rect x="410" y="333.5" width="2" height="57.5" fill="#00ff00"/><rect x="422" y="333.5" width="2" height="57.5" fill="#00ff00"/><rect x="426" y="333.5" width="2" height="57.5" fill="#00ff00"/><rect x="450" y="333.5" width="2" height="57.5" fill="#00ff00"/><rect x="454" y="333.5" width="2" height="57.5" fill="#00ff00"/><rect x="398" y="275.5" width="2" height="115.5" fill="#00ff00"/><rect x="432" y="275.5" width="2" height="115.5" fill="#00ff00"/><rect x="440" y="275.5" width="2" height="115.5" fill="#00ff00"/><rect x="434" y="333.5" width="2" height="57.5" fill="#4c888e"/><rect x="442" y="333.5" width="2" height="57.5" fill="#4c888e"/><rect x="446" y="333.5" width="4" height="57.5" fill="#c8c8c8"/><rect x="458" y="333.5" width="2" height="57.5" fill="#e0e0e0"/><g fill="none" stroke="#c8c8c8" stroke-width="1"><path d="M28.5 217.5H464.5V416.5H28.5Z"/><path d="M28.5 391.5H464.5"/></g><line x1="29" y1="405.5" x2="463" y2="405.5" stroke="#383838" stroke-width="1"/><rect x="202" y="394" width="175" height="2" fill="#dcdcdc"/><rect x="202" y="393" width="1" height="4" fill="#dcdcdc"/><rect x="376" y="393" width="1" height="4" fill="#dcdcdc"/><rect x="202" y="398" width="175" height="2" fill="#4a8a8c"/><rect x="202" y="397" width="1" height="5" fill="#4a8a8c"/><rect x="376" y="397" width="1" height="5" fill="#4a8a8c"/><rect x="146" y="402" width="118" height="2" fill="#00ff00"/><rect x="146" y="401" width="1" height="5" fill="#00ff00"/><rect x="263" y="401" width="1" height="5" fill="#00ff00"/><rect x="215" y="407" width="1" height="7" fill="#0000ff"/><rect x="227" y="407" width="1" height="7" fill="#0000ff"/><rect x="231" y="407" width="1" height="7" fill="#0000ff"/><rect x="281" y="407" width="1" height="7" fill="#0000ff"/><rect x="288" y="407" width="1" height="7" fill="#0000ff"/><rect x="301" y="407" width="1" height="7" fill="#0000ff"/><rect x="316" y="407" width="1" height="7" fill="#0000ff"/><rect x="341" y="407" width="1" height="7" fill="#d8d8d8"/><rect x="399" y="407" width="2" height="7" fill="#d8d8d8"/><rect x="411" y="407" width="1" height="7" fill="#d8d8d8"/><rect x="423" y="407" width="1" height="7" fill="#d8d8d8"/><rect x="427" y="407" width="1" height="7" fill="#d8d8d8"/><rect x="432" y="407" width="3" height="7" fill="#d8d8d8"/><rect x="441" y="407" width="1" height="7" fill="#d8d8d8"/><rect x="443" y="407" width="1" height="7" fill="#d8d8d8"/><rect x="448" y="407" width="3" height="7" fill="#d8d8d8"/><rect x="454" y="407" width="1" height="7" fill="#d8d8d8"/><rect x="459" y="407" width="1" height="7" fill="#d8d8d8"/><g font-family="Liberation Sans,sans-serif" font-size="12" fill="#e0e0e0"><text x="24" y="337.5" text-anchor="end">1</text><text x="24" y="279.5" text-anchor="end">2</text><text x="24" y="221.5" text-anchor="end">3</text><text x="28" y="429" text-anchor="middle">0</text><text x="128" y="429" text-anchor="middle">1</text><text x="228" y="429" text-anchor="middle">2</text><text x="328" y="429" text-anchor="middle">3</text><text x="428" y="429" text-anchor="middle">4</text></g></svg>
<div id="tbl"><div class="th"><span style="left:6px">Atom 1</span><i style="left:90px"></i><span style="left:96px">Atom 2</span><i style="left:237px"></i><span style="left:243px">d 1,2</span><b class="sort"></b><i style="left:316px"></i><span style="left:322px">Flags</span><i style="left:393px"></i><span style="left:398px">Interaction</span></div><div class="tr on" style="top:24px"><em class="cb"><svg width="13" height="13" viewBox="0 0 13 13"><path d="M2.5 6.5L5 9.5L10.5 3.5" fill="none" stroke="#333" stroke-width="1.3"/></svg></em><span style="left:22.5px;letter-spacing:-0.35px">"Sb1"</span><span class="a2" style="left:96px;letter-spacing:-0.3px">"F1"</span><span class="num" style="left:243px">1.86929</span><span style="left:322px">+CD</span><span style="left:398px">strong</span></div><div class="tr on" style="top:43px"><em class="cb"><svg width="13" height="13" viewBox="0 0 13 13"><path d="M2.5 6.5L5 9.5L10.5 3.5" fill="none" stroke="#333" stroke-width="1.3"/></svg></em><span style="left:22.5px;letter-spacing:-0.35px">"Sb1"</span><span class="a2" style="left:96px;letter-spacing:-0.3px">"F2"</span><span class="num" style="left:243px">1.98724</span><span style="left:322px">+CD</span><span style="left:398px">strong</span></div><div class="tr on" style="top:62px"><em class="cb"><svg width="13" height="13" viewBox="0 0 13 13"><path d="M2.5 6.5L5 9.5L10.5 3.5" fill="none" stroke="#333" stroke-width="1.3"/></svg></em><span style="left:22.5px;letter-spacing:-0.35px">"Sb1"</span><span class="a2" style="left:96px;letter-spacing:-0.3px">"F3"</span><span class="num" style="left:243px">2.02548</span><span style="left:322px">+CD</span><span style="left:398px">strong</span></div><div class="tr on" style="top:81px"><em class="cb"><svg width="13" height="13" viewBox="0 0 13 13"><path d="M2.5 6.5L5 9.5L10.5 3.5" fill="none" stroke="#333" stroke-width="1.3"/></svg></em><span style="left:22.5px;letter-spacing:-0.35px">"Sb1"</span><span class="a2" style="left:96px;letter-spacing:-0.3px">"F12"</span><span class="num" style="left:243px">2.53414</span><span style="left:322px">-D</span><span style="left:398px">strong</span></div><div class="tr on" style="top:100px"><em class="cb"><svg width="13" height="13" viewBox="0 0 13 13"><path d="M2.5 6.5L5 9.5L10.5 3.5" fill="none" stroke="#333" stroke-width="1.3"/></svg></em><span style="left:22.5px;letter-spacing:-0.35px">"Sb1"</span><span class="a2" style="left:96px;letter-spacing:-0.3px">"F5"</span><span class="num" style="left:243px">2.60094</span><span style="left:322px">-D</span><span style="left:398px">strong</span></div><div class="tr on" style="top:119px"><em class="cb"><svg width="13" height="13" viewBox="0 0 13 13"><path d="M2.5 6.5L5 9.5L10.5 3.5" fill="none" stroke="#333" stroke-width="1.3"/></svg></em><span style="left:22.5px;letter-spacing:-0.35px">"Sb1"</span><span class="a2" style="left:96px;letter-spacing:-0.3px">"F6"</span><span class="num" style="left:243px">2.72572</span><span style="left:322px">-D</span><span style="left:398px">strong</span></div><div class="tr on" style="top:138px"><em class="cb"><svg width="13" height="13" viewBox="0 0 13 13"><path d="M2.5 6.5L5 9.5L10.5 3.5" fill="none" stroke="#333" stroke-width="1.3"/></svg></em><span style="left:22.5px;letter-spacing:-0.35px">"Sb1"</span><span class="a2" style="left:96px;letter-spacing:-0.3px">"F7"</span><span class="num" style="left:243px">2.87814</span><span style="left:322px">-D</span><span style="left:398px">strong</span></div><div class="tr" style="top:157px"><em class="cb"></em><span style="left:22.5px;letter-spacing:-0.35px">"Sb1"</span><span class="a2" style="left:96px;letter-spacing:-0.3px">"F14"</span><span class="num" style="left:243px">3.13324</span><span style="left:322px">-D</span><span style="left:398px">0</span></div><div class="tr" style="top:176px"><em class="cb"></em><span style="left:22.5px;letter-spacing:-0.35px">"Sb1"</span><span class="a2" style="left:96px;letter-spacing:-0.3px">"F4"</span><span class="num" style="left:243px">3.70617</span><span style="left:322px">-</span><span style="left:398px"></span></div><div class="tr" style="top:195px"><em class="cb"></em><span style="left:22.5px;letter-spacing:-0.35px">"Sb1"</span><span class="a2" style="left:96px;letter-spacing:0px">"F4" (x, 1/2-y, -1/2+z)</span><span class="num" style="left:243px">3.7176</span><span style="left:322px">-</span><span style="left:398px"></span></div><div class="tr" style="top:214px"><em class="cb"></em><span style="left:22.5px;letter-spacing:-0.35px">"Sb1"</span><span class="a2" style="left:96px;letter-spacing:-0.3px">"F15"</span><span class="num" style="left:243px">3.83281</span><span style="left:322px">-D</span><span style="left:398px">0</span></div><div class="tr" style="top:233px"><em class="cb"></em><span style="left:22.5px;letter-spacing:-0.35px">"Sb1"</span><span class="a2" style="left:96px;letter-spacing:-0.3px">"F10"</span><span class="num" style="left:243px">3.94886</span><span style="left:322px">-</span><span style="left:398px"></span></div><div class="vl" style="left:90px"></div><div class="vl" style="left:237px"></div><div class="vl" style="left:316px"></div><div class="vl" style="left:393px"></div></div>
<div id="sb"><svg width="9" height="6" viewBox="0 0 9 6" style="top:7px"><path d="M0.8 5L4.5 1.3L8.2 5" fill="none" stroke="#606060" stroke-width="1.7"/></svg><div class="thumb"></div>
<svg width="9" height="6" viewBox="0 0 9 6" style="top:240px"><path d="M0.8 1L4.5 4.7L8.2 1" fill="none" stroke="#606060" stroke-width="1.7"/></svg></div>
<div id="red"></div>
<div class="btn" style="left:4px;width:111px"><span style="position:absolute;left:20px;top:1px;letter-spacing:-0.25px">Settings...</span><i style="position:absolute;left:91px;top:4px;width:1px;height:19px;background:#000"></i><b class="tri" style="left:96px;top:11px"></b></div>
<div class="btn" style="left:123px;width:68px"><span style="position:absolute;left:6px;top:1px">Actions</span><b class="tri" style="left:51px;top:11px"></b></div>
<div class="btn" style="left:199px;width:57px"><span style="position:absolute;left:14px;top:1px;letter-spacing:-0.4px">Close</span></div>
</div>

<div id="topw"></div>
</body></html>
